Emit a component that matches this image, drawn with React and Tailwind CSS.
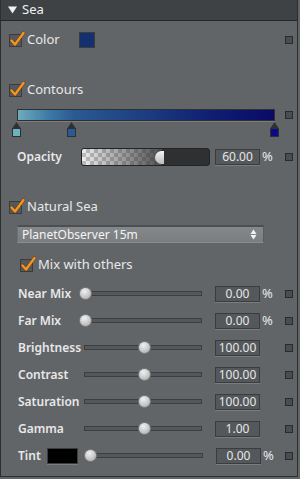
import React from "react";

function Check() {
  return (
    <div className="relative w-[13px] h-[13px] border border-[#3a3c3e] bg-[#55585b] shrink-0">
      <svg className="absolute left-[-1px] top-[-4px]" width="17" height="17" viewBox="0 0 17 17">
        <path d="M2.5 9.5 L6 13.5 L14.5 2" fill="none" stroke="#5a3a10" strokeWidth="3.6" strokeLinecap="round" strokeLinejoin="round" opacity="0.6" />
        <path d="M2.5 9.5 L6 13.5 L14.5 2" fill="none" stroke="#f7931e" strokeWidth="2.4" strokeLinecap="round" strokeLinejoin="round" />
      </svg>
    </div>
  );
}

function Sq() {
  return <div className="w-[8px] h-[8px] border border-[#2a2b2d] bg-[#4a4c4f] shrink-0" />;
}

function NumBox({ v }) {
  return (
    <div className="w-[45px] h-[16px] border border-[#3a3c3f] bg-[#55585b] shadow-[0_1px_0_#7a7d80] flex items-center justify-center text-[12px] text-[#e6e6e6] leading-none">
      {v}
    </div>
  );
}

function Thumb({ left }) {
  return (
    <div
      className="absolute top-0 w-[13px] h-[13px] rounded-full bg-[radial-gradient(circle_at_40%_30%,#f0f0f0,#c4c4c4_60%,#9c9c9c)] border border-[#7a7c7e]"
      style={{ left }}
    />
  );
}

function SliderRow({ label, thumb, value, pct, tint }) {
  return (
    <div className="h-[27px] flex items-center pl-[17px]">
      {tint ? (
        <>
          <div className="w-[29px] font-semibold">{label}</div>
          <div className="w-[31px] h-[16px] bg-black border border-[#3a3c3e] shadow-[0_1px_0_#7a7d80]" />
          <div className="relative w-[119px] h-[13px] ml-[6px]">
            <div className="absolute left-[5px] right-0 top-[4px] h-[5px] border border-[#3c3e40] bg-[#55585b]" />
            <Thumb left={thumb} />
          </div>
        </>
      ) : (
        <>
          <div className="w-[61px] font-semibold whitespace-nowrap">{label}</div>
          <div className="relative w-[123px] h-[13px]">
            <div className="absolute left-[5px] right-0 top-[4px] h-[5px] border border-[#3c3e40] bg-[#55585b]" />
            <Thumb left={thumb} />
          </div>
        </>
      )}
      <div className="ml-[13px]">
        <NumBox v={value} />
      </div>
      <div className="w-[14px] pl-[2px] text-[13px]">{pct ? "%" : ""}</div>
      <div className="ml-auto mr-[4px]">
        <Sq />
      </div>
    </div>
  );
}

function Marker({ left, color }) {
  return (
    <div className="absolute top-0 w-[9px] flex flex-col items-center" style={{ left }}>
      <svg width="9" height="6" viewBox="0 0 9 6">
        <path d="M4.5 0 L8.5 6 L0.5 6 Z" fill="#2e3032" />
      </svg>
      <div className="w-[9px] h-[9px] border border-[#2e3032]" style={{ background: color }} />
    </div>
  );
}

export default function App() {
  return (
    <div className="w-[300px] h-[479px] bg-[#626568] text-[#e8e8e8] text-[12px] font-['Noto_Sans',sans-serif]">
      <div className="w-[298px] h-[477px] border-l border-r border-b border-[#2c2e30] flex flex-col">
        <div className="h-[21px] bg-[#3e4245] border-b border-[#25272a] flex items-center pl-[7px] gap-[5px] shrink-0">
          <svg width="9" height="8" viewBox="0 0 9 8">
            <path d="M0 0.5 L9 0.5 L4.5 7.5 Z" fill="#f2f2f2" />
          </svg>
          <span className="text-[13px] text-[#f0f0f0]">Sea</span>
        </div>

        {/* Color */}
        <div className="h-[16px] mt-[11px] flex items-center pl-[8px]">
          <Check />
          <span className="ml-[5px] text-[13px]">Color</span>
          <div className="ml-[19px] w-[16px] h-[16px] bg-[#14306e] border border-[#3a3c3e]" />
          <div className="ml-auto mr-[4px]">
            <Sq />
          </div>
        </div>

        {/* Contours */}
        <div className="h-[16px] mt-[34px] flex items-center pl-[8px]">
          <Check />
          <span className="ml-[5px] text-[13px]">Contours</span>
        </div>

        <div className="h-[12px] mt-[11px] flex items-center">
          <div className="ml-[16px] w-[258px] h-[12px] border border-[#2e3032] shadow-[0_1px_0_#7a7d80] bg-[linear-gradient(to_right,#6eabba_0%,#3d7aa4_12%,#2b5a92_22%,#1c3d80_50%,#0f1f72_75%,#0a0a66_100%)]" />
          <div className="ml-auto mr-[4px]">
            <Sq />
          </div>
        </div>
        <div className="relative h-[15px] mt-[1px]">
          <Marker left={11} color="#6cb2c2" />
          <Marker left={66} color="#2b5a94" />
          <Marker left={269} color="#0a0a88" />
        </div>

        {/* Opacity */}
        <div className="h-[18px] mt-[11px] flex items-center pl-[16px]">
          <div className="w-[64px] font-semibold">Opacity</div>
          <div className="relative w-[129px] h-[18px] rounded-[3px] border border-[#232425] overflow-hidden bg-[#2f3031]">
            <svg className="absolute left-0 top-0" width="80" height="16">
              <defs>
                <pattern id="chk" width="8" height="8" patternUnits="userSpaceOnUse">
                  <rect width="8" height="8" fill="#bdbdbd" />
                  <rect width="4" height="4" fill="#eeeeee" />
                  <rect x="4" y="4" width="4" height="4" fill="#eeeeee" />
                </pattern>
                <linearGradient id="fade" x1="0" x2="1" y1="0" y2="0">
                  <stop offset="0" stopColor="#333" stopOpacity="0" />
                  <stop offset="1" stopColor="#333" stopOpacity="0.85" />
                </linearGradient>
              </defs>
              <rect width="80" height="16" fill="url(#chk)" />
              <rect width="80" height="16" fill="url(#fade)" />
            </svg>
            <div className="absolute left-[73px] top-[2px] w-[9px] h-[13px] rounded-l-full bg-[linear-gradient(to_bottom,#f4f4f4,#bcbcbc)]" />
          </div>
          <div className="ml-[5px]">
            <NumBox v="60.00" />
          </div>
          <div className="pl-[2px] text-[13px]">%</div>
          <div className="ml-auto mr-[4px]">
            <Sq />
          </div>
        </div>

        {/* Natural Sea */}
        <div className="h-[16px] mt-[33px] flex items-center pl-[8px]">
          <Check />
          <span className="ml-[5px] text-[13px]">Natural Sea</span>
        </div>

        <div className="mt-[10px] ml-[16px] w-[247px] h-[18px] border-t-2 border-t-[#4c4f52] border-b border-b-[#8a8d90] border-l border-l-[#6e7174] border-r border-r-[#5a5d60] bg-[linear-gradient(to_bottom,#85888b,#7b7e81)] flex items-center pl-[4px] pr-[6px]">
          <span className="text-[12px] text-[#f4f4f4] flex-1">PlanetObserver 15m</span>
          <svg width="7" height="11" viewBox="0 0 7 11">
            <path d="M3.5 0.5 L6.5 5 L0.5 5 Z" fill="#f4f4f4" />
            <path d="M3.5 10.5 L6.5 6 L0.5 6 Z" fill="#f4f4f4" />
          </svg>
        </div>

        {/* Mix with others */}
        <div className="h-[16px] mt-[14px] flex items-center pl-[19px]">
          <Check />
          <span className="ml-[5px] text-[13px]">Mix with others</span>
        </div>

        <div className="mt-[7px] flex flex-col">
          <SliderRow label="Near Mix" thumb={0} value="0.00" pct />
          <SliderRow label="Far Mix" thumb={0} value="0.00" pct />
          <SliderRow label="Brightness" thumb={59} value="100.00" />
          <SliderRow label="Contrast" thumb={59} value="100.00" />
          <SliderRow label="Saturation" thumb={59} value="100.00" />
          <SliderRow label="Gamma" thumb={59} value="1.00" />
          <SliderRow label="Tint" thumb={0} value="0.00" pct tint />
        </div>
      </div>
    </div>
  );
}
